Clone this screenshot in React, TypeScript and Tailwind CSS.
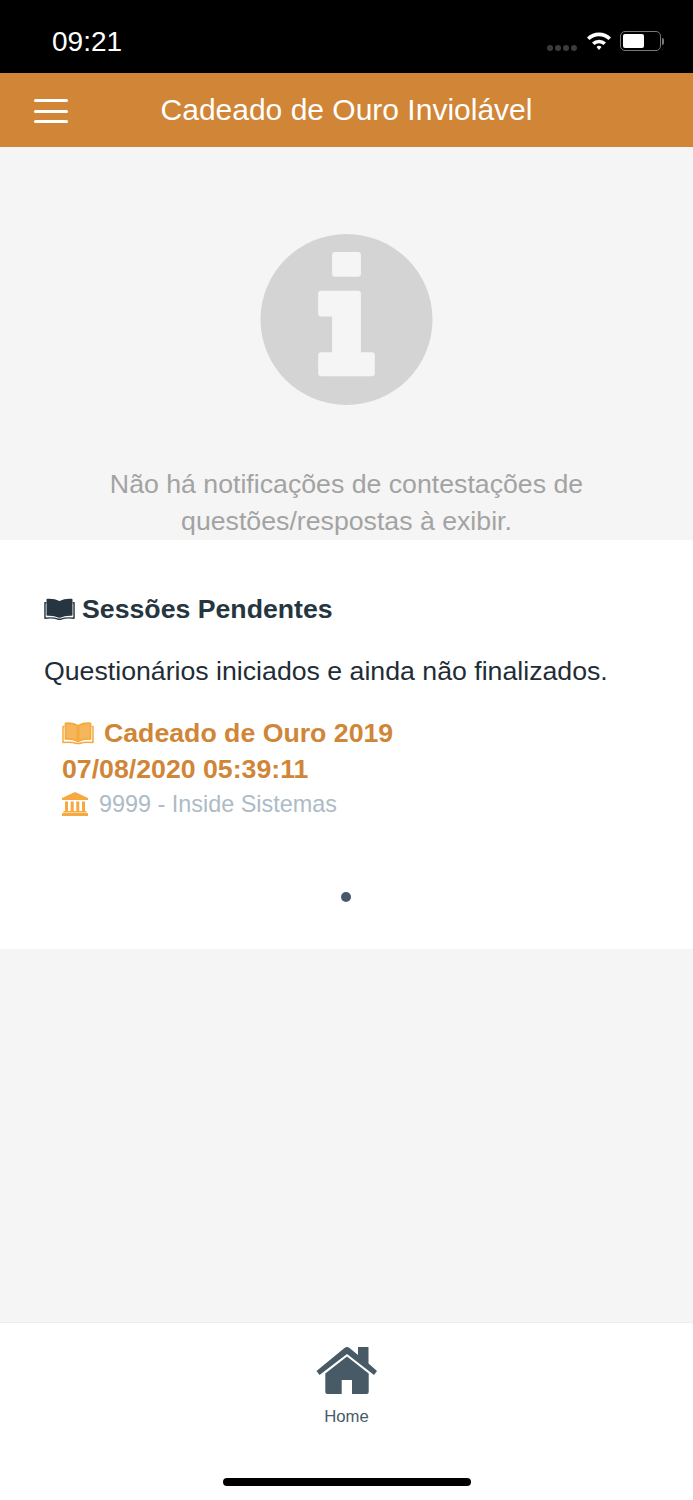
function BookIcon({ className, fade }: { className: string; fade: number }) {
  return (
    <svg viewBox="0 0 32 24" className={className}>
      <path
        d="M15.500 4.500C12 2.600 8 2 3.500 2.300V18c4.500-.2 8.500.3 12 2.200z"
        fill="currentColor"
        fillOpacity={fade}
        stroke="currentColor"
        strokeWidth="1.800"
        strokeLinejoin="round"
      />
      <path
        d="M16.500 4.500C20 2.600 24 2 28.500 2.300V18c-4.500-.2-8.500.3-12 2.200z"
        fill="currentColor"
        fillOpacity={fade}
        stroke="currentColor"
        strokeWidth="1.800"
        strokeLinejoin="round"
      />
      <path
        d="M2.500 5.500H1v16c5-.6 10-.4 13.500 1h3c3.500-1.400 8.500-1.600 13.500-1v-16h-1.500"
        fill="none"
        stroke="currentColor"
        strokeWidth="1.500"
        strokeLinejoin="round"
      />
    </svg>
  );
}

function BankIcon() {
  return (
    <svg viewBox="0 0 26 24" className="h-[24px] w-[26px] text-[#f5a93f]">
      <path d="M13 0l13 6v2H0V6z" fill="currentColor" />
      <rect x="3" y="9.500" width="3" height="9.500" fill="currentColor" />
      <rect x="8.700" y="9.500" width="3" height="9.500" fill="currentColor" />
      <rect x="14.300" y="9.500" width="3" height="9.500" fill="currentColor" />
      <rect x="20" y="9.500" width="3" height="9.500" fill="currentColor" />
      <rect x="1.500" y="19" width="23" height="1.500" fill="currentColor" />
      <rect x="0" y="21" width="26" height="3" rx="0.500" fill="currentColor" />
    </svg>
  );
}

function HomeIcon() {
  return (
    <svg viewBox="0 0 62 49" className="h-[49px] w-[62px] text-[#475a66]">
      <path
        d="M.5 25L28.500 2q2.500-1.800 5 0L42 9V1.500q0-.5.5-.5H52q.5 0 .5.5V17.500L61 25l-3 4L31 8 3.500 29z"
        fill="currentColor"
      />
      <path
        d="M31 10.500L52.700 27.500V46a2 2 0 0 1-2 2H36V34H25.700v14H11.300a2 2 0 0 1-2-2V27.500z"
        fill="currentColor"
      />
    </svg>
  );
}

function InfoIcon() {
  return (
    <svg viewBox="0 0 173 172" className="h-[172px] w-[173px]">
      <ellipse cx="86.500" cy="86" rx="86.500" ry="86" fill="#d4d4d4" />
      <rect x="72" y="18" width="29" height="25" rx="3" fill="#f5f5f5" />
      <path
        d="M61 57h37a3 3 0 0 1 3 3v59h11a3 3 0 0 1 3 3v18a3 3 0 0 1-3 3H61a3 3 0 0 1-3-3v-18a3 3 0 0 1 3-3h11V83H61a3 3 0 0 1-3-3V60a3 3 0 0 1 3-3z"
        fill="#f5f5f5"
      />
    </svg>
  );
}

function StatusBar() {
  return (
    <div className="flex h-[73px] shrink-0 items-start justify-between bg-black pl-[52px] pr-[29px] pt-[25px]">
      <span className="text-[28px] font-normal leading-[34px] text-white">09:21</span>
      <div className="flex items-center pt-[6px]">
        <div className="mr-[9px] mt-[14px] flex gap-[2px]">
          <span className="h-[6px] w-[6px] rounded-full bg-[#3a3a3a]" />
          <span className="h-[6px] w-[6px] rounded-full bg-[#3a3a3a]" />
          <span className="h-[6px] w-[6px] rounded-full bg-[#3a3a3a]" />
          <span className="h-[6px] w-[6px] rounded-full bg-[#3a3a3a]" />
        </div>
        <svg viewBox="0 0 26 20" className="h-[20px] w-[26px]">
          <path d="M1 6.500a17 17 0 0 1 24 0l-2.500 2.600a13.500 13.500 0 0 0-19 0z" fill="#fff" />
          <path d="M6 11.500a10 10 0 0 1 14 0l-2.500 2.500a6.500 6.500 0 0 0-9 0z" fill="#fff" />
          <path d="M10.500 16a3.500 3.500 0 0 1 5 0L13 19z" fill="#fff" />
        </svg>
        <div className="ml-[8px] flex items-center">
          <div className="h-[20px] w-[41px] rounded-[5px] border border-[#777] p-[2px]">
            <div className="h-full w-[21px] rounded-[2px] bg-white" />
          </div>
          <div className="ml-[1px] h-[7px] w-[2px] rounded-r-full bg-[#777]" />
        </div>
      </div>
    </div>
  );
}

export default function App() {
  return (
    <div className="flex h-[1500px] w-[693px] flex-col overflow-hidden bg-[#f5f5f5] font-['Liberation_Sans',Arial,sans-serif]">
      <StatusBar />

      <header className="relative flex h-[74px] shrink-0 items-center justify-center bg-[#d08537]">
        <div className="absolute left-[34px] top-[26px] flex w-[34px] flex-col gap-[7.500px]">
          <span className="h-[3px] rounded-full bg-white" />
          <span className="h-[3px] rounded-full bg-white" />
          <span className="h-[3px] rounded-full bg-white" />
        </div>
        <h1 className="text-[30px] font-normal leading-none text-white">Cadeado de Ouro Inviolável</h1>
      </header>

      <section className="flex h-[393px] shrink-0 flex-col items-center overflow-hidden pt-[87px]">
        <InfoIcon />
        <p className="mt-[61px] w-[520px] text-center text-[26.700px] leading-[37px] text-[#a3a3a3]">
          Não há notificações de contestações de questões/respostas à exibir.
        </p>
      </section>

      <section className="h-[409px] shrink-0 bg-white pl-[44px] pt-[52px]">
        <h2 className="flex items-center gap-[7px] text-[26.700px] font-bold leading-[34px] text-[#263640]">
          <BookIcon className="h-[24px] w-[31px] text-[#263640]" fade={1} />
          Sessões Pendentes
        </h2>
        <p className="mt-[27px] text-[26.700px] leading-[36px] text-[#1f2d37]">
          Questionários iniciados e ainda não finalizados.
        </p>
        <div className="mt-[26px] pl-[18px]">
          <div className="flex items-center gap-[10px] text-[26.700px] font-bold leading-[36px] text-[#d08537]">
            <BookIcon className="h-[24px] w-[32px] text-[#f5a93f]" fade={0.85} />
            Cadeado de Ouro 2019
          </div>
          <div className="text-[26.700px] font-bold leading-[36px] text-[#d08537]">07/08/2020 05:39:11</div>
          <div className="flex items-center gap-[11px] text-[23.400px] leading-[34px] text-[#adbbc6]">
            <BankIcon />
            9999 - Inside Sistemas
          </div>
        </div>
        <div className="ml-[297px] mt-[71px] h-[10px] w-[10px] rounded-full bg-[#46596a]" />
      </section>

      <div className="flex-1" />

      <nav className="flex h-[178px] shrink-0 flex-col items-center border-t border-[#ececec] bg-white pt-[23px]">
        <HomeIcon />
        <span className="mt-[12px] text-[16.700px] leading-[20px] text-[#475a66]">Home</span>
        <div className="mt-[51px] h-[8px] w-[248px] rounded-full bg-black" />
      </nav>
    </div>
  );
}
